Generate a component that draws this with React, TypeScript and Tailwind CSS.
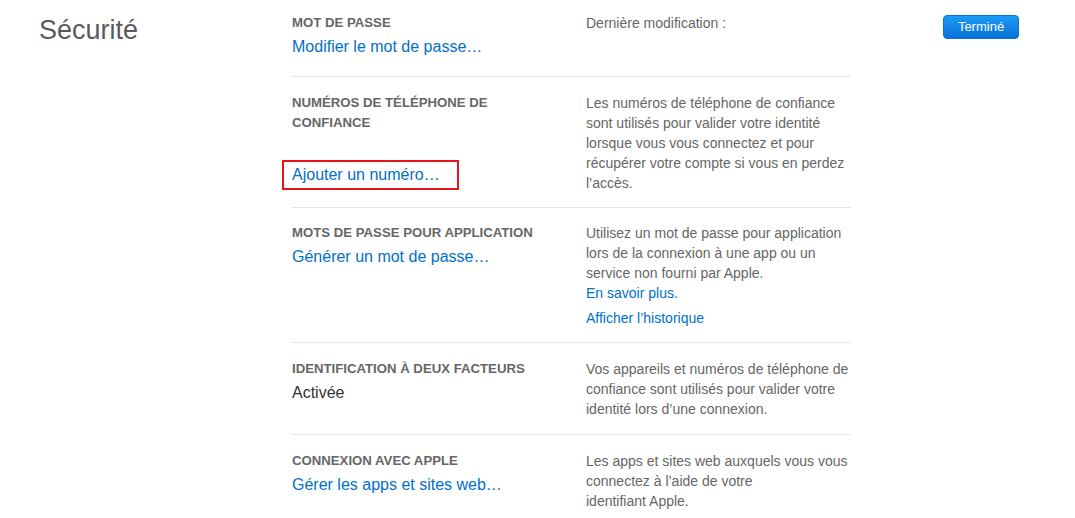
import React from "react";

const font = { fontFamily: '"Liberation Sans", Arial, sans-serif' };

function Label({ children }: { children: React.ReactNode }) {
  return <div className="text-[13.2px] font-bold uppercase leading-5 text-[#666]">{children}</div>;
}

function Action({ children }: { children: React.ReactNode }) {
  return <div className="text-[16px] leading-7 text-[#0070c9]">{children}</div>;
}

function Note({ children }: { children: React.ReactNode }) {
  return <div className="text-[14px] leading-5 text-[#666]">{children}</div>;
}

function Row({
  left,
  right,
  last,
  pad = "pt-4 pb-[15px]",
}: {
  left: React.ReactNode;
  right: React.ReactNode;
  last?: boolean;
  pad?: string;
}) {
  return (
    <div className={`grid grid-cols-[294px_265px] ${pad} ${last ? "" : "border-b border-[#e5e5e5]"}`}>
      <div>{left}</div>
      <div>{right}</div>
    </div>
  );
}

export default function App() {
  return (
    <div className="flex h-[518px] w-[1075px] overflow-hidden bg-white" style={font}>
      <div className="w-[292px] shrink-0 pl-[39px] pt-[14px]">
        <h1 className="text-[27px] font-normal leading-8 text-[#5a5a5a]">Sécurité</h1>
      </div>

      <div className="w-[559px] shrink-0">
        <div className="grid grid-cols-[294px_265px] border-b border-[#e5e5e5] pt-[13px] pb-[15px]">
          <div>
            <Label>Mot de passe</Label>
            <Action>Modifier le mot de passe…</Action>
          </div>
          <Note>Dernière modification :</Note>
        </div>

        <Row
          pad="pt-4 pb-[14px]"
          left={
            <>
              <Label>
                Numéros de téléphone de
                <br />
                confiance
              </Label>
              <div className="mt-7">
                <span className="relative inline-block text-[16px] leading-7 text-[#0070c9]">
                  Ajouter un numéro…
                  <span className="absolute -left-[10px] -right-[19px] top-[-1px] bottom-[-1px] border-2 border-[#e8141b]" />
                </span>
              </div>
            </>
          }
          right={
            <Note>
              Les numéros de téléphone de confiance sont utilisés pour valider votre identité lorsque vous vous
              connectez et pour récupérer votre compte si vous en perdez l’accès.
            </Note>
          }
        />

        <Row
          pad="pt-[15px] pb-[14px]"
          left={
            <>
              <Label>Mots de passe pour application</Label>
              <Action>Générer un mot de passe…</Action>
            </>
          }
          right={
            <>
              <Note>
                Utilisez un mot de passe pour application lors de la connexion à une app ou un service non fourni
                par Apple.
              </Note>
              <div className="text-[14px] leading-5 text-[#0070c9]">En savoir plus.</div>
              <div className="mt-[5px] text-[14px] leading-5 text-[#0070c9]">Afficher l’historique</div>
            </>
          }
        />

        <Row
          left={
            <>
              <Label>Identification à deux facteurs</Label>
              <div className="text-[16px] leading-7 text-[#333]">Activée</div>
            </>
          }
          right={
            <Note>
              Vos appareils et numéros de téléphone de confiance sont utilisés pour valider votre identité lors
              d’une connexion.
            </Note>
          }
        />

        <Row
          last
          left={
            <>
              <Label>Connexion avec Apple</Label>
              <Action>Gérer les apps et sites web…</Action>
            </>
          }
          right={
            <Note>
              Les apps et sites web auxquels vous vous connectez à l’aide de votre
              <br />
              identifiant Apple.
            </Note>
          }
        />
      </div>

      <div className="flex-1 pl-[92px] pt-[14px]">
        <button className="h-6 w-[76px] rounded-[4px] border border-[#0a6fd0] bg-gradient-to-b from-[#1d9bf5] to-[#0771d8] text-[13px] leading-none text-white">
          Terminé
        </button>
      </div>
    </div>
  );
}
